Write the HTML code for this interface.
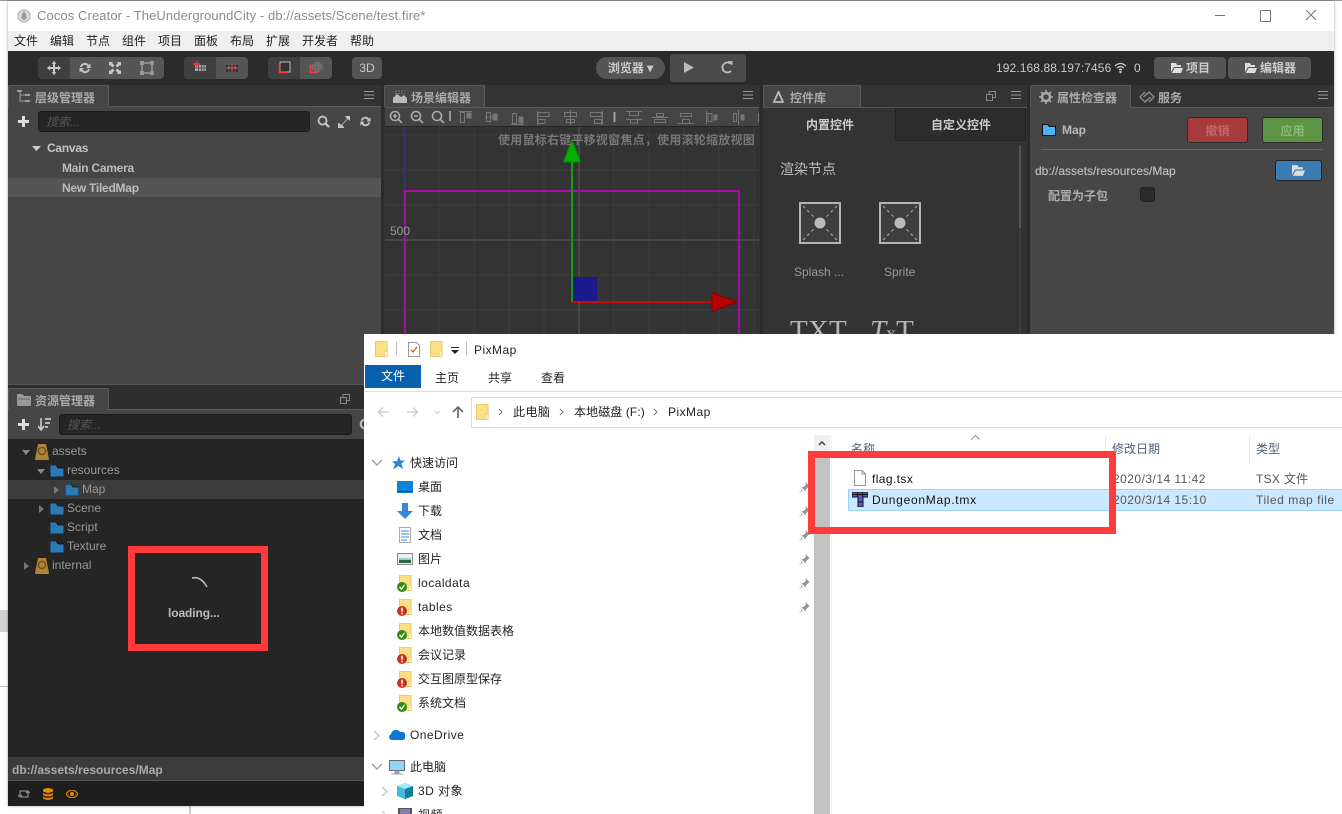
<!DOCTYPE html>
<html lang="zh"><head><meta charset="utf-8"><title>Cocos Creator</title>
<style>
html,body{margin:0;padding:0;background:#fff}
#r{position:relative;width:1342px;height:814px;overflow:hidden;background:#fff;font-family:"Liberation Sans","Noto Sans CJK SC",sans-serif;font-size:12px}
#r div,#r svg{position:absolute}
.t{white-space:nowrap;line-height:16px;height:16px}
.b{font-weight:bold}
.c{color:#ccc}
.m{color:#222}
.tab{background:#464646;border:1px solid #5a5a5a;border-bottom:0;box-sizing:border-box;border-radius:2px 2px 0 0}
.nav{color:#222;letter-spacing:.45px}
.g{background:#555;border-radius:4px}
.d{background:#404040}
</style></head><body><div id="r">
<svg width="0" height="0" style="left:0;top:0"><defs>
<symbol id="fd" viewBox="0 0 14 12"><path d="M0 0h6l2 3h6v9H0z" fill="#2a7ab5" stroke="#111" stroke-width=".8"/></symbol>
<symbol id="db" viewBox="0 0 14 16"><path d="M3 0h8l3 15q0 1-1 1H1q-1 0-1-1z" fill="#b08434"/><circle cx="7" cy="7" r="3.6" fill="none" stroke="#6e5120" stroke-width="1.4"/></symbol>
<symbol id="yf" viewBox="0 0 14 17"><path d="M.5.5h12.500v16H.5z" fill="#fde083" stroke="#e6c564"/><path d="M10 11h3v5.500h-3z" fill="#fff3c4" stroke="#e6c564" stroke-width=".6"/></symbol>
<symbol id="pin" viewBox="0 0 12 12"><path d="M7 0l5 5-2 .5-2.500 2.500-.3 2.200-4.400-4.400 2.200-.3L7.500 3z M3 8l-3 4 4-3z" fill="#8a97a3"/></symbol>
<symbol id="ok" viewBox="0 0 10 10"><circle cx="5" cy="5" r="5" fill="#2d8a17"/><path d="M2.500 5l2 2 3-4" fill="none" stroke="#fff" stroke-width="1.400"/></symbol>
<symbol id="er" viewBox="0 0 10 10"><circle cx="5" cy="5" r="5" fill="#c9321c"/><path d="M4.200 1.800h1.600v4H4.200zM4.200 6.800h1.600v1.500H4.200z" fill="#fff"/></symbol>
<symbol id="sp" viewBox="0 0 42 42"><rect x="1" y="1" width="40" height="40" fill="#3e3e3e" stroke="#b5b5b5" stroke-width="2"/><path d="M4 4l12 12M38 4L26 16M4 38l12-12M38 38L26 26" stroke="#aaa" stroke-dasharray="3 3"/><circle cx="21" cy="21" r="5.500" fill="#bbb"/></symbol>
<symbol id="ref" viewBox="0 0 14 14"><path d="M2 6a5 5 0 0 1 9-2l1.500-1.500V7H8l1.500-1.500a3 3 0 0 0-5.500.5zM12 8a5 5 0 0 1-9 2l-1.500 1.500V7H6l-1.500 1.500a3 3 0 0 0 5.500-.5z" fill="#c4c4c4"/></symbol>
<symbol id="lens" viewBox="0 0 14 14"><circle cx="6" cy="6" r="4.300" fill="none" stroke="#c4c4c4" stroke-width="2"/><path d="M9 9l4 4" stroke="#c4c4c4" stroke-width="2.400"/></symbol>
<symbol id="menu" viewBox="0 0 10 8"><path d="M0 .5h10M0 4h10M0 7.500h10" stroke="#999"/></symbol>
<symbol id="float" viewBox="0 0 10 10"><rect x="3" y=".5" width="6.500" height="6" fill="none" stroke="#888"/><rect x=".5" y="3.500" width="6" height="6" fill="#333" stroke="#888"/></symbol>
<symbol id="open" viewBox="0 0 12 10"><path d="M0 0h5l1 2h4v2H3L0 9zM3.500 5H12l-2 5H0.800z" fill="#ddd"/></symbol>
</defs></svg>

<!-- background leftovers -->
<div style="left:0;top:0;width:1342px;height:1px;background:#999"></div>
<div style="left:0;top:610px;width:8px;height:22px;background:#d2d2d2"></div>
<div style="left:0;top:686px;width:8px;height:1px;background:#bbb"></div>
<div style="left:189px;top:806px;width:2px;height:8px;background:#ccc"></div>

<!-- window -->
<div style="left:8px;top:1px;width:1326px;height:805px;background:#2b2b2b;box-shadow:0 0 3px rgba(0,0,0,.35)"></div>
<div style="left:8px;top:1px;width:1326px;height:30px;background:#fff"></div>
<svg style="left:17px;top:9px" width="14" height="14" viewBox="0 0 14 14"><circle cx="7" cy="7" r="6" fill="#ddd" stroke="#aaa"/><path d="M7 2q3 4 2.500 6.500a2.500 2.500 0 0 1-5 0Q4 6 7 2z" fill="#999"/></svg>
<div class="t" style="left:37px;top:8px;font-size:13px;color:#8b8b8b;letter-spacing:.1px">Cocos Creator - TheUndergroundCity - db://assets/Scene/test.fire*</div>
<div style="left:1215px;top:15px;width:10px;height:1px;background:#777"></div>
<div style="left:1260px;top:10px;width:9px;height:10px;border:1px solid #777"></div>
<svg style="left:1305px;top:9px" width="12" height="12"><path d="M1 1l10 10M11 1L1 11" stroke="#777"/></svg>
<div style="left:8px;top:31px;width:1326px;height:20px;background:#efefef"></div>
<div class="t m" style="left:14px;top:33px">文件</div><div class="t m" style="left:50px;top:33px">编辑</div><div class="t m" style="left:86px;top:33px">节点</div><div class="t m" style="left:122px;top:33px">组件</div><div class="t m" style="left:158px;top:33px">项目</div><div class="t m" style="left:194px;top:33px">面板</div><div class="t m" style="left:230px;top:33px">布局</div><div class="t m" style="left:266px;top:33px">扩展</div><div class="t m" style="left:302px;top:33px">开发者</div><div class="t m" style="left:350px;top:33px">帮助</div>

<!-- toolbar -->
<div class="g" style="left:38px;top:57px;width:126px;height:22px"></div>
<div class="d" style="left:38px;top:57px;width:32px;height:22px;border-radius:4px 0 0 4px"></div>
<svg style="left:47px;top:61px" width="14" height="14" viewBox="0 0 14 14"><path d="M7 0l2.500 3H8v3h3V4.500L14 7l-3 2.500V8H8v3h1.500L7 14l-2.500-3H6V8H3v1.500L0 7l3-2.500V6h3V3H4.500z" fill="#c8c8c8"/></svg>
<svg style="left:78px;top:61px" width="14" height="14"><use href="#ref"/></svg>
<svg style="left:109px;top:62px" width="12" height="12" viewBox="0 0 12 12"><path d="M0 0h4L3 1l2.500 2.500L3.500 5.500 1 3 0 4zM12 0v4l-1-1-2.500 2.500-2-2L9 1 8 0zM0 12V8l1 1 2.500-2.500 2 2L3 11l1 1zM12 12H8l1-1-2.500-2.500 2-2L11 9l1-1z" fill="#c8c8c8"/></svg>
<svg style="left:140px;top:61px" width="14" height="14" viewBox="0 0 14 14"><rect x="2" y="2" width="10" height="10" fill="none" stroke="#999" stroke-width="1.500"/><path d="M0 0h4v4H0zM10 0h4v4h-4zM0 10h4v4H0zM10 10h4v4h-4z" fill="#999"/></svg>
<div class="g" style="left:184px;top:57px;width:64px;height:22px"></div>
<div class="d" style="left:184px;top:57px;width:32px;height:22px;border-radius:4px 0 0 4px"></div>
<svg style="left:193px;top:61px" width="14" height="11" viewBox="0 0 14 11"><path d="M2 4h11v6H2z" fill="#aaa"/><path d="M5.500 4v6M8.500 4v6M11 4v6M2 7h11" stroke="#555"/><path d="M3.500 0v6M0 3h7" stroke="#f33" stroke-width="1.500"/></svg>
<svg style="left:225px;top:63px" width="14" height="10" viewBox="0 0 14 10"><path d="M1 2h12v7H1z" fill="#333"/><path d="M4 2v7M10 2v7M1 5.500h12" stroke="#666"/><path d="M7 0v9M2 4.500h10" stroke="#f33" stroke-width="1.200"/></svg>
<div class="g" style="left:268px;top:57px;width:64px;height:22px"></div>
<div class="d" style="left:268px;top:57px;width:32px;height:22px;border-radius:4px 0 0 4px"></div>
<svg style="left:278px;top:61px" width="13" height="13" viewBox="0 0 13 13"><rect x="2" y="1" width="10" height="10" fill="#333" stroke="#bbb"/><path d="M1.500 3v8.500h6" fill="none" stroke="#f33" stroke-width="1.500"/><path d="M7 10l2 1.500-2 1.500z" fill="#f33"/></svg>
<svg style="left:309px;top:61px" width="14" height="13" viewBox="0 0 14 13"><circle cx="8" cy="6" r="5.500" fill="#777"/><path d="M2.500 6h11M8 .5v11M5 1v10M11 1v10M3.500 3h9M3.500 9h9" stroke="#555" stroke-width=".6"/><path d="M1.500 3.500v8h6" fill="none" stroke="#f33" stroke-width="1.500"/><path d="M7 10l2 1.500-2 1.500z" fill="#f33"/></svg>
<div class="g t c" style="left:352px;top:57px;width:30px;height:22px;line-height:22px;text-align:center;font-size:12px">3D</div>
<div class="g t b c" style="left:596px;top:57px;width:69px;height:22px;line-height:22px;border-radius:11px;text-align:center">浏览器 ▾</div>
<div style="left:670px;top:54px;width:76px;height:28px;background:#4a4a4a;border-radius:3px"></div>
<svg style="left:684px;top:62px" width="10" height="11"><path d="M0 0l10 5.500L0 11z" fill="#bbb"/></svg>
<svg style="left:721px;top:61px" width="12" height="13" viewBox="0 0 12 13"><path d="M10 3a5 5 0 1 0 0 7" fill="none" stroke="#bbb" stroke-width="1.800"/><path d="M7 0h4.500v4.500z" fill="#bbb"/></svg>
<div class="t c" style="left:996px;top:60px;letter-spacing:.1px">192.168.88.197:7456</div>
<svg style="left:1114px;top:62px" width="13" height="12" viewBox="0 0 13 12"><path d="M1 4q5.500-5 11 0M3 6q3.500-3 7 0M5 8q1.500-1.500 3 0" fill="none" stroke="#ccc" stroke-width="1.300"/><circle cx="6.500" cy="10" r="1.200" fill="#ccc"/></svg>
<div class="t c" style="left:1134px;top:60px">0</div>
<div class="g" style="left:1154px;top:57px;width:72px;height:22px"></div>
<svg style="left:1171px;top:63px" width="12" height="10"><use href="#open"/></svg>
<div class="t b c" style="left:1186px;top:60px">项目</div>
<div class="g" style="left:1228px;top:57px;width:83px;height:22px"></div>
<svg style="left:1245px;top:63px" width="12" height="10"><use href="#open"/></svg>
<div class="t b c" style="left:1260px;top:60px">编辑器</div>

<!-- hierarchy -->
<div style="left:8px;top:85px;width:373px;height:300px;background:#333"></div>
<div style="left:8px;top:106px;width:373px;height:279px;background:#464646;border-top:1px solid #5a5a5a;box-sizing:border-box"></div>
<div class="tab" style="left:8px;top:85px;width:101px;height:22px"></div>
<svg style="left:17px;top:90px" width="13" height="13" viewBox="0 0 13 13"><path d="M0 0h5v2H0zM8 4h5v2H8zM8 10h5v2H8z" fill="#999"/><path d="M3 2v9h5M3 5h5" fill="none" stroke="#999"/></svg>
<div class="t b" style="left:35px;top:90px;color:#aaa">层级管理器</div>
<svg style="left:364px;top:91px" width="10" height="8"><use href="#menu"/></svg>
<svg style="left:18px;top:116px" width="11" height="11"><path d="M4 0h3v4h4v3H7v4H4V7H0V4h4z" fill="#ddd"/></svg>
<div style="left:38px;top:111px;width:272px;height:21px;background:#252525;border:1px solid #1c1c1c;box-sizing:border-box;border-radius:3px"></div>
<div class="t" style="left:46px;top:114px;color:#555;font-style:italic">搜索...</div>
<svg style="left:317px;top:115px" width="13" height="13"><use href="#lens"/></svg>
<svg style="left:338px;top:116px" width="12" height="12" viewBox="0 0 12 12"><path d="M7 0h5v5l-2-2-6 6 2 2v1H0V7h1l2 2 6-6z" fill="#c4c4c4"/></svg>
<svg style="left:359px;top:115px" width="13" height="13"><use href="#ref"/></svg>
<svg style="left:32px;top:146px" width="9" height="5"><path d="M0 0h9L4.500 5z" fill="#ccc"/></svg>
<div class="t b" style="left:47px;top:140px;color:#c4c4c4;letter-spacing:-.25px">Canvas</div>
<div class="t b" style="left:62px;top:160px;color:#bbb;letter-spacing:-.25px">Main Camera</div>
<div style="left:8px;top:178px;width:373px;height:19px;background:#555"></div>
<div class="t b" style="left:62px;top:180px;color:#bbb;letter-spacing:-.25px">New TiledMap</div>

<!-- scene -->
<div style="left:384px;top:85px;width:376px;height:250px;background:#333;overflow:hidden">
 <div style="left:1px;top:22px;width:374px;height:20px;background:#444;border-top:1px solid #5a5a5a;border-bottom:1px solid #262626;box-sizing:border-box"></div>
 <div style="left:1px;top:42px;width:374px;height:210px;background:#333"></div>
</div>
<div class="tab" style="left:384px;top:85px;width:101px;height:22px"></div>
<svg style="left:393px;top:90px" width="14" height="13" viewBox="0 0 14 13"><path d="M0 13V8l4-4 4 3 3-2 3 3v5z" fill="#bbb"/><path d="M2 1h10M2 3.500h10" stroke="#777" stroke-dasharray="2 1"/></svg>
<div class="t b" style="left:411px;top:90px;color:#aaa">场景编辑器</div>
<svg style="left:743px;top:91px" width="10" height="8"><use href="#menu"/></svg>
<svg style="left:389px;top:110px" width="370" height="16" viewBox="0 0 370 16" fill="none" stroke="#aaa">
 <g stroke-width="1.600"><circle cx="6" cy="6" r="4.500"/><path d="M9 9l4 4M4 6h4M6 4v4"/><circle cx="27" cy="6" r="4.500"/><path d="M30 9l4 4M25 6h4"/><circle cx="48" cy="6" r="4.500"/><path d="M51 9l4 4M61 1v10"/></g>
 <g stroke="#777">
  <path d="M70 1.500h13M71.500 2.500h4v10h-4z"/><path d="M78 3h4v5h-4z" fill="#777"/>
  <path d="M96 7h13M97.500 2.500h4v9h-4z"/><path d="M104 4h4v6h-4z" fill="#777"/>
  <path d="M122 14.500h13M123.500 3.500h4v10h-4z"/><path d="M130 7h4v6h-4z" fill="#777"/>
  <path d="M148.500 1v14M149 2.500h11v4h-11zM149 9.500h7v4h-7z"/>
  <path d="M181.500 0v15M175.500 2.500h12v4h-12zM177.500 9.500h8v3h-8z"/>
  <path d="M213.500 1v14M201.500 2.500h11v4h-11zM205.500 9.500h7v4h-7z"/>
 </g>
 <path d="M225.500 2v10" stroke-width="1.800"/>
 <g stroke="#777">
  <path d="M237 1.500h16M240.500 2v3.500h9V2M237 9.500h16M241.500 10v3h7v-3"/>
  <path d="M263 7.500h16M267.500 3.500h7v3h-7zM265.500 9.500h11v3h-11z"/>
  <path d="M289 13.500h16M293.500 9.500h7v4h-7zM291.500 3.500h11v3h-11z"/>
  <path d="M317.500 1v13M319 3.500h4v8h-4z"/><path d="M325 5h3v5h-3z" fill="#777"/>
  <path d="M349.500 0v15M344.500 3.500h3v8h-3z"/><path d="M352 5h3v5h-3z" fill="#777"/>
  <path d="M369.500 3v9"/>
 </g>
</svg>
<svg style="left:385px;top:127px" width="374" height="207" viewBox="0 0 374 207" fill="none">
 <g stroke="#3e3e3e"><path d="M19 0v207M54 0v207M89 0v207M124 0v207M159 0v207M229 0v207M264 0v207M299 0v207M334 0v207M369 0v207M0 8h374M0 43h374M0 78h374M0 148h374M0 183h374"/></g>
 <path d="M0 113h374M194 0v207" stroke="#4f4f4f" stroke-width="1.500"/>
 <path d="M20 0v64" stroke="#33336a" stroke-width="2"/>
 <rect x="20" y="64" width="334" height="160" stroke="#a80ca8" stroke-width="2"/>
 <rect x="187" y="150" width="25" height="25" fill="#1a1a8c"/>
 <path d="M187 35v140" stroke="#0fa80f" stroke-width="1.800"/>
 <path d="M187 13l-8.500 22h17z" fill="#00b000" stroke="#0a8a0a"/>
 <path d="M187 175h141" stroke="#f00" stroke-width="1.600"/>
 <path d="M352 175l-25-9.500v19z" fill="#b80000" stroke="#800"/>
</svg>
<div class="t b" style="left:498px;top:132px;color:#777;letter-spacing:.24px">使用鼠标右键平移视窗焦点，使用滚轮缩放视图</div>
<div class="t" style="left:390px;top:223px;color:#999">500</div>

<!-- library -->
<div style="left:763px;top:85px;width:264px;height:250px;background:#333"></div>
<div class="tab" style="left:763px;top:85px;width:98px;height:23px;background:#464646"></div>
<svg style="left:773px;top:91px" width="11" height="12"><path d="M5.500 1L10 11H1z" fill="none" stroke="#bbb" stroke-width="1.800"/></svg>
<div class="t b" style="left:790px;top:90px;color:#aaa">控件库</div>
<svg style="left:986px;top:91px" width="10" height="10"><use href="#float"/></svg>
<svg style="left:1011px;top:91px" width="10" height="8"><use href="#menu"/></svg>
<div style="left:763px;top:107px;width:264px;height:1px;background:#555"></div>
<div style="left:895px;top:108px;width:131px;height:33px;background:#2c2c2c;border:1px solid #242424;box-sizing:border-box"></div>
<div class="t b c" style="left:806px;top:117px">内置控件</div>
<div class="t b c" style="left:931px;top:117px">自定义控件</div>
<div style="left:1019px;top:146px;width:2px;height:82px;background:#555"></div>
<div style="left:1019px;top:228px;width:2px;height:106px;background:#3c3c3c"></div>
<div class="t" style="left:780px;top:161px;font-size:14px;color:#bbb">渲染节点</div>
<svg style="left:799px;top:202px" width="42" height="42"><use href="#sp"/></svg>
<svg style="left:879px;top:202px" width="42" height="42"><use href="#sp"/></svg>
<div class="t" style="left:794px;top:264px;color:#999">Splash ...</div>
<div class="t" style="left:884px;top:264px;color:#999">Sprite</div>
<div class="t" style="left:790px;top:316px;height:30px;font:29px/30px 'Liberation Serif',serif;color:#b5b5b5;letter-spacing:.2px">TXT</div>
<div class="t" style="left:870px;top:316px;height:30px;font:29px/30px 'Liberation Serif',serif;color:#b5b5b5"><i>T</i><span style="font-size:20px">x</span>T</div>

<!-- inspector -->
<div style="left:1030px;top:85px;width:304px;height:250px;background:#333"></div>
<div style="left:1030px;top:107px;width:304px;height:228px;background:#464646;border-top:1px solid #5a5a5a;box-sizing:border-box"></div>
<div class="tab" style="left:1030px;top:85px;width:101px;height:23px"></div>
<svg style="left:1039px;top:90px" width="14" height="14" viewBox="0 0 14 14"><circle cx="7" cy="7" r="4" fill="none" stroke="#aaa" stroke-width="2.500"/><path d="M7 0v3M7 11v3M0 7h3M11 7h3M2 2l2 2M10 10l2 2M12 2l-2 2M4 10l-2 2" stroke="#aaa" stroke-width="1.600"/></svg>
<div class="t b" style="left:1057px;top:90px;color:#aaa">属性检查器</div>
<svg style="left:1139px;top:91px" width="16" height="12" viewBox="0 0 16 12" fill="none" stroke="#888" stroke-width="1.500"><path d="M6 1L1 6l5 5 3-3M10 11l5-5-5-5-3 3M4.500 6L8 2.500M11.500 6L8 9.500"/></svg>
<div class="t b" style="left:1158px;top:90px;color:#aaa">服务</div>
<svg style="left:1318px;top:91px" width="10" height="8"><use href="#menu"/></svg>
<svg style="left:1042px;top:124px" width="14" height="12" viewBox="0 0 14 12"><path d="M.5.500h5l2 2h6v9H.5z" fill="#4ab2f5" stroke="#111"/></svg>
<div class="t b" style="left:1062px;top:122px;color:#bbb">Map</div>
<div class="t b" style="left:1187px;top:117px;width:61px;height:26px;line-height:26px;background:#a73a3a;border:1px solid #2c2c2c;border-radius:3px;box-sizing:border-box;text-align:center;color:#c56868">撤销</div>
<div class="t b" style="left:1262px;top:117px;width:61px;height:26px;line-height:26px;background:#5c9444;border:1px solid #2c2c2c;border-radius:3px;box-sizing:border-box;text-align:center;color:#8cb97a">应用</div>
<div style="left:1041px;top:149px;width:282px;height:1px;background:#666"></div>
<div class="t" style="left:1035px;top:163px;color:#bbb;text-shadow:0 0 .4px #bbb">db://assets/resources/Map</div>
<div style="left:1275px;top:160px;width:47px;height:21px;background:#3a7cb4;border:1px solid #222;border-radius:3px;box-sizing:border-box"></div>
<svg style="left:1292px;top:165px" width="13" height="11"><use href="#open"/></svg>
<div class="t b" style="left:1048px;top:188px;color:#aaa">配置为子包</div>
<div style="left:1140px;top:187px;width:15px;height:15px;background:#2b2b2b;border:1px solid #222;border-radius:3px;box-sizing:border-box"></div>

<!-- assets -->
<div style="left:8px;top:384px;width:373px;height:1px;background:#555"></div>
<div style="left:8px;top:385px;width:356px;height:421px;background:#2e2e2e"></div>
<div style="left:8px;top:409px;width:356px;height:30px;background:#464646;border-top:1px solid #5a5a5a;box-sizing:border-box"></div>
<div class="tab" style="left:8px;top:388px;width:101px;height:22px"></div>
<svg style="left:17px;top:394px" width="14" height="12" viewBox="0 0 14 12"><path d="M0 0h5l2 2h7v10H0z" fill="#999"/><path d="M1 5h12" stroke="#666"/></svg>
<div class="t b" style="left:35px;top:393px;color:#aaa">资源管理器</div>
<svg style="left:340px;top:394px" width="10" height="10"><use href="#float"/></svg>
<svg style="left:18px;top:419px" width="11" height="11"><path d="M4 0h3v4h4v3H7v4H4V7H0V4h4z" fill="#ddd"/></svg>
<svg style="left:38px;top:418px" width="13" height="13" viewBox="0 0 13 13"><path d="M3 0v11M0 8l3 4 3-4M7 1h6M7 5h5M7 9h3" fill="none" stroke="#c4c4c4" stroke-width="1.700"/></svg>
<div style="left:59px;top:414px;width:293px;height:21px;background:#252525;border:1px solid #1c1c1c;box-sizing:border-box;border-radius:3px"></div>
<div class="t" style="left:67px;top:417px;color:#555;font-style:italic">搜索...</div>
<svg style="left:359px;top:418px" width="13" height="13" viewBox="0 0 13 13"><circle cx="6" cy="6" r="4.300" fill="none" stroke="#c4c4c4" stroke-width="2"/></svg>
<div style="left:8px;top:439px;width:356px;height:318px;background:#252525"></div>
<div style="left:8px;top:480px;width:356px;height:19px;background:#3c3c3c"></div>
<svg style="left:22px;top:450px" width="8" height="5"><path d="M0 0h8L4 5z" fill="#888"/></svg>
<svg style="left:35px;top:444px" width="14" height="16"><use href="#db"/></svg><div class="t" style="left:52px;top:443px;color:#999">assets</div>
<svg style="left:37px;top:469px" width="8" height="5"><path d="M0 0h8L4 5z" fill="#888"/></svg>
<svg style="left:50px;top:465px" width="14" height="12"><use href="#fd"/></svg><div class="t" style="left:67px;top:462px;color:#999">resources</div>
<svg style="left:54px;top:486px" width="5" height="8"><path d="M0 0l5 4-5 4z" fill="#777"/></svg>
<svg style="left:65px;top:484px" width="14" height="12"><use href="#fd"/></svg><div class="t" style="left:82px;top:481px;color:#999">Map</div>
<svg style="left:39px;top:505px" width="5" height="8"><path d="M0 0l5 4-5 4z" fill="#777"/></svg>
<svg style="left:50px;top:503px" width="14" height="12"><use href="#fd"/></svg><div class="t" style="left:67px;top:500px;color:#999">Scene</div>
<svg style="left:50px;top:522px" width="14" height="12"><use href="#fd"/></svg><div class="t" style="left:67px;top:519px;color:#999">Script</div>
<svg style="left:50px;top:541px" width="14" height="12"><use href="#fd"/></svg><div class="t" style="left:67px;top:538px;color:#999">Texture</div>
<svg style="left:24px;top:562px" width="5" height="8"><path d="M0 0l5 4-5 4z" fill="#777"/></svg>
<svg style="left:35px;top:558px" width="14" height="16"><use href="#db"/></svg><div class="t" style="left:52px;top:557px;color:#999">internal</div>
<svg style="left:190px;top:575px" width="20" height="14"><path d="M2 3q9-2 15 9" fill="none" stroke="#bbb" stroke-width="1.500"/></svg>
<div class="t b" style="left:168px;top:605px;color:#bbb;font-size:12px;letter-spacing:-.1px">loading...</div>
<div style="left:8px;top:757px;width:356px;height:24px;background:#3c3c3c;border-bottom:1px solid #555;box-sizing:border-box"></div>
<div class="t b" style="left:12px;top:762px;color:#aaa">db://assets/resources/Map</div>
<div style="left:8px;top:781px;width:356px;height:25px;background:#1e1e1e"></div>
<svg style="left:18px;top:789px" width="12" height="10" viewBox="0 0 12 10" fill="none" stroke="#888" stroke-width="1.300"><path d="M2 8V2h8M10 2v6H3M0 6l2 2 2-2M8 4l2-2 2 2"/></svg>
<svg style="left:43px;top:788px" width="10" height="12" viewBox="0 0 10 12"><path d="M0 1.500q5-3 10 0v2q-5 3-10 0zM0 5q5 3 10 0v2q-5 3-10 0zM0 8.500q5 3 10 0v2q-5 3-10 0z" fill="#ee8a00"/></svg>
<svg style="left:66px;top:790px" width="12" height="8" viewBox="0 0 12 8"><path d="M0 4q6-8 12 0q-6 8-12 0z" fill="none" stroke="#ee8a00" stroke-width="1.300"/><circle cx="6" cy="4" r="2" fill="#ee8a00"/></svg>

<!-- explorer -->
<div style="left:364px;top:334px;width:978px;height:480px;background:#fff"></div>
<svg style="left:375px;top:341px" width="13" height="16"><use href="#yf"/></svg>
<div style="left:396px;top:342px;width:1px;height:13px;background:#bbb"></div>
<svg style="left:408px;top:342px" width="12" height="15" viewBox="0 0 12 15"><path d="M.5.5h8l3 3v11H.5z" fill="#fff" stroke="#999"/><path d="M3 8l2 2 4-5" fill="none" stroke="#e2582a" stroke-width="1.300"/></svg>
<svg style="left:430px;top:341px" width="13" height="16"><use href="#yf"/></svg>
<svg style="left:451px;top:347px" width="8" height="7"><path d="M0 0h8v1H0zM0 3h8L4 7z" fill="#222"/></svg>
<div style="left:466px;top:342px;width:1px;height:13px;background:#bbb"></div>
<div class="t nav" style="left:474px;top:342px">PixMap</div>
<div class="t" style="left:365px;top:365px;width:56px;height:23px;line-height:23px;background:#0a60b0;color:#fff;text-align:center">文件</div>
<div class="t m" style="left:435px;top:370px">主页</div><div class="t m" style="left:488px;top:370px">共享</div><div class="t m" style="left:541px;top:370px">查看</div>
<div style="left:365px;top:391px;width:977px;height:1px;background:#dadada"></div>
<svg style="left:377px;top:405px" width="90" height="14" viewBox="0 0 90 14" fill="none"><path d="M12 7H2M6 2.500L1.500 7 6 11.500M30 7h10M36 2.500L40.500 7 36 11.500" stroke="#c8c8c8" stroke-width="1.300"/><path d="M58 6l2.500 2.500L63 6" stroke="#ccc"/><path d="M81 13V2M76 7l5-5 5 5" stroke="#666" stroke-width="1.600"/></svg>
<div style="left:471px;top:397px;width:880px;height:31px;border:1px solid #d9d9d9;box-sizing:border-box"></div>
<svg style="left:476px;top:404px" width="13" height="16"><use href="#yf"/></svg>
<svg style="left:498px;top:408px" width="5" height="8"><path d="M1 1l3 3-3 3" fill="none" stroke="#777"/></svg>
<div class="t nav" style="left:513px;top:404px">此电脑</div>
<svg style="left:559px;top:408px" width="5" height="8"><path d="M1 1l3 3-3 3" fill="none" stroke="#777"/></svg>
<div class="t nav" style="left:574px;top:404px;letter-spacing:.1px">本地磁盘 (F:)</div>
<svg style="left:653px;top:408px" width="5" height="8"><path d="M1 1l3 3-3 3" fill="none" stroke="#777"/></svg>
<div class="t nav" style="left:668px;top:404px">PixMap</div>

<svg style="left:371px;top:459px" width="13" height="8"><path d="M1 1l5 5 5-5" fill="none" stroke="#999" stroke-width="1.300"/></svg>
<svg style="left:391px;top:456px" width="14" height="14" viewBox="0 0 14 14"><path d="M8 0l1.500 4.500H14L10.500 7.500 12 13 7.500 10 2 13.500 4 8 1 5.500l5-.5z" fill="#2b8ad8"/></svg>
<div class="t nav" style="left:410px;top:455px;letter-spacing:0">快速访问</div>
<svg style="left:397px;top:481px" width="16" height="12"><rect width="16" height="12" fill="#0f82dc"/><path d="M0 10.500h16" stroke="#0a4f96"/></svg><div class="t nav" style="left:418px;top:479px;letter-spacing:0">桌面</div>
<svg style="left:397px;top:503px" width="16" height="16"><path d="M5 0h6v8h5l-8 8-8-8h5z" fill="#3a86d6"/></svg><div class="t nav" style="left:418px;top:503px;letter-spacing:0">下载</div>
<svg style="left:399px;top:527px" width="12" height="16"><path d="M.5.5h11v15H.5z" fill="#fff" stroke="#aaa"/><path d="M2 4h8M2 7h8M2 10h8M2 13h6" stroke="#3a86d6"/></svg><div class="t nav" style="left:418px;top:527px;letter-spacing:0">文档</div>
<svg style="left:397px;top:553px" width="16" height="12"><rect x=".5" y=".5" width="15" height="11" fill="#eee" stroke="#888"/><path d="M2 5h12v2H2z" fill="#9cc"/><path d="M2 7h12v3H2z" fill="#364"/></svg><div class="t nav" style="left:418px;top:551px;letter-spacing:0">图片</div>
<svg style="left:399px;top:575px" width="13" height="16"><use href="#yf"/></svg><svg style="left:397px;top:582px" width="10" height="10"><use href="#ok"/></svg><div class="t nav" style="left:418px;top:575px">localdata</div>
<svg style="left:399px;top:599px" width="13" height="16"><use href="#yf"/></svg><svg style="left:397px;top:606px" width="10" height="10"><use href="#er"/></svg><div class="t nav" style="left:418px;top:599px">tables</div>
<svg style="left:399px;top:623px" width="13" height="16"><use href="#yf"/></svg><svg style="left:397px;top:630px" width="10" height="10"><use href="#ok"/></svg><div class="t nav" style="left:418px;top:623px;letter-spacing:0">本地数值数据表格</div>
<svg style="left:399px;top:647px" width="13" height="16"><use href="#yf"/></svg><svg style="left:397px;top:654px" width="10" height="10"><use href="#er"/></svg><div class="t nav" style="left:418px;top:647px;letter-spacing:0">会议记录</div>
<svg style="left:399px;top:671px" width="13" height="16"><use href="#yf"/></svg><svg style="left:397px;top:678px" width="10" height="10"><use href="#er"/></svg><div class="t nav" style="left:418px;top:671px;letter-spacing:0">交互图原型保存</div>
<svg style="left:399px;top:695px" width="13" height="16"><use href="#yf"/></svg><svg style="left:397px;top:702px" width="10" height="10"><use href="#ok"/></svg><div class="t nav" style="left:418px;top:695px;letter-spacing:0">系统文档</div>
<svg style="left:799px;top:482px" width="11" height="11"><use href="#pin"/></svg><svg style="left:799px;top:506px" width="11" height="11"><use href="#pin"/></svg><svg style="left:799px;top:530px" width="11" height="11"><use href="#pin"/></svg><svg style="left:799px;top:554px" width="11" height="11"><use href="#pin"/></svg><svg style="left:799px;top:578px" width="11" height="11"><use href="#pin"/></svg><svg style="left:799px;top:602px" width="11" height="11"><use href="#pin"/></svg>
<svg style="left:373px;top:730px" width="7" height="11"><path d="M1 1l5 4.500L1 10" fill="none" stroke="#c4c4c4" stroke-width="1.300"/></svg>
<svg style="left:389px;top:729px" width="16" height="11" viewBox="0 0 16 11"><path d="M3 11a3 3 0 0 1-1-5.800A5 5 0 0 1 11 3a3.500 3.500 0 0 1 3 8z" fill="#0a78d4"/></svg>
<div class="t nav" style="left:410px;top:727px">OneDrive</div>
<svg style="left:371px;top:763px" width="13" height="8"><path d="M1 1l5 5 5-5" fill="none" stroke="#999" stroke-width="1.300"/></svg>
<svg style="left:389px;top:760px" width="16" height="15" viewBox="0 0 16 15"><rect x=".5" y=".5" width="15" height="10" fill="#8fd6f5" stroke="#667"/><path d="M6 11h4v2H6zM2 14h12" fill="#9ab" stroke="#99a"/></svg>
<div class="t nav" style="left:410px;top:759px;letter-spacing:0">此电脑</div>
<svg style="left:381px;top:786px" width="7" height="11"><path d="M1 1l5 4.500L1 10" fill="none" stroke="#c4c4c4" stroke-width="1.300"/></svg>
<svg style="left:397px;top:783px" width="16" height="16" viewBox="0 0 16 16"><path d="M8 0l8 3v10l-8 3-8-3V3z" fill="#3fbcd8"/><path d="M8 6l8-3v10l-8 3z" fill="#0f7f9c"/><path d="M8 0l8 3-8 3-8-3z" fill="#a6e8f5"/></svg>
<div class="t nav" style="left:418px;top:783px">3D 对象</div>
<svg style="left:381px;top:810px" width="7" height="4"><path d="M1 1l3 3" stroke="#c4c4c4"/></svg>
<svg style="left:398px;top:808px" width="14" height="6"><rect width="14" height="6" fill="#555"/><path d="M2 1h10v5H2z" fill="#8a7ab5"/></svg>
<div class="t nav" style="left:418px;top:807px">视频</div>

<!-- scrollbar & list -->
<div style="left:814px;top:435px;width:16px;height:379px;background:#c2c2c2"></div>
<div style="left:814px;top:435px;width:16px;height:17px;background:#f0f0f0"></div>
<svg style="left:818px;top:441px" width="8" height="5"><path d="M1 4l3-3 3 3" fill="none" stroke="#444" stroke-width="1.500"/></svg>
<div style="left:831px;top:435px;width:1px;height:379px;background:#f2f2f2"></div>
<svg style="left:971px;top:435px" width="9" height="5"><path d="M.5 4.500l4-4 4 4" fill="none" stroke="#888"/></svg>
<div class="t" style="left:851px;top:441px;color:#4c607a">名称</div>
<div style="left:1105px;top:436px;width:1px;height:28px;background:#e5e5e5"></div>
<div class="t" style="left:1112px;top:441px;color:#4c607a">修改日期</div>
<div style="left:1249px;top:436px;width:1px;height:28px;background:#e5e5e5"></div>
<div class="t" style="left:1256px;top:441px;color:#4c607a">类型</div>
<svg style="left:854px;top:470px" width="12" height="16" viewBox="0 0 12 16"><path d="M.5.500h7.500l3.500 3.500v11.500H.5zM8 .5V4h3.500" fill="#fff" stroke="#999"/></svg>
<div class="t" style="left:872px;top:471px;color:#111;letter-spacing:.4px">flag.tsx</div>
<div class="t" style="left:1113px;top:471px;color:#555;letter-spacing:.47px">2020/3/14 11:42</div>
<div class="t" style="left:1256px;top:471px;color:#555;letter-spacing:.3px">TSX 文件</div>
<div style="left:848px;top:489px;width:494px;height:22px;background:#cce8ff;border:1px solid #99d1ff;border-right:0;box-sizing:border-box"></div>
<svg style="left:852px;top:492px" width="16" height="15" viewBox="0 0 16 15"><path d="M0 0h16v5h-5v10H6V5H0z" fill="#5a5ad0" stroke="#111"/><path d="M5.500 0v5M10.500 0v5M6 10h5M0 2.500h16" stroke="#111"/></svg>
<div class="t" style="left:872px;top:492px;color:#111;letter-spacing:.72px">DungeonMap.tmx</div>
<div class="t" style="left:1113px;top:492px;color:#555;letter-spacing:.47px">2020/3/14 15:10</div>
<div class="t" style="left:1256px;top:492px;color:#555;letter-spacing:.56px">Tiled map file</div>

<!-- red annotations -->
<div style="left:128px;top:546px;width:140px;height:105px;border:7px solid #ff3b3b;box-sizing:border-box"></div>
<div style="left:808px;top:451px;width:308px;height:83px;border:7px solid #ff3b3b;box-sizing:border-box"></div>
</div></body></html>
